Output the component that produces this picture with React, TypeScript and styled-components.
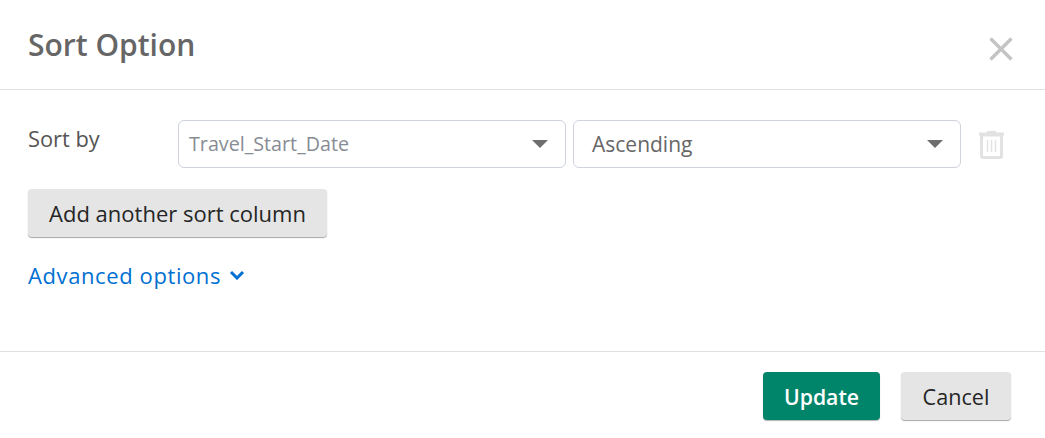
import React from "react";
import styled, { createGlobalStyle } from "styled-components";

const GlobalStyle = createGlobalStyle`
  html, body {
    margin: 0;
    padding: 0;
    background: #fff;
    font-family: "Open Sans", "Liberation Sans", sans-serif;
  }
`;

const Dialog = styled.div`
  width: 1045px;
  height: 438px;
  display: flex;
  flex-direction: column;
  background: #fff;
`;

const Header = styled.header`
  flex: none;
  box-sizing: border-box;
  height: 90px;
  display: flex;
  align-items: center;
  justify-content: space-between;
  padding: 0 30px 0 28px;
  border-bottom: 1px solid #e0e0e0;
`;

const Title = styled.h2`
  margin: 0;
  font-size: 30px;
  font-weight: 600;
  color: #666;
`;

const CloseButton = styled.button`
  display: flex;
  padding: 0;
  margin: 9px 1px 0 0;
  border: 0;
  background: none;
`;

const Body = styled.div`
  flex: none;
  box-sizing: border-box;
  height: 261px;
  padding: 30px 0 0 28px;
  display: flex;
  flex-direction: column;
  align-items: flex-start;
`;

const SortRow = styled.div`
  display: flex;
  align-items: flex-start;
`;

const SortLabel = styled.label`
  width: 150px;
  padding-top: 5px;
  font-size: 21.8px;
  line-height: 27px;
  color: #555;
`;

const Select = styled.div<{ $small?: boolean }>`
  box-sizing: border-box;
  width: 388px;
  height: 48px;
  margin-right: 7px;
  display: flex;
  align-items: center;
  justify-content: space-between;
  padding: 0 17px 1px ${(p) => (p.$small ? "10px" : "18px")};
  border: 1px solid #cfd3dc;
  border-radius: 6px;
  font-size: ${(p) => (p.$small ? "19.7px" : "21px")};
  color: ${(p) => (p.$small ? "#868b94" : "#666")};
`;

const Caret = styled.span`
  width: 0;
  height: 0;
  border-left: 8px solid transparent;
  border-right: 8px solid transparent;
  border-top: 8px solid #6e6e6e;
`;

const TrashButton = styled.button`
  display: flex;
  padding: 0;
  margin: 10px 0 0 11px;
  border: 0;
  background: none;
`;

const GreyButton = styled.button`
  height: 48px;
  border: 0;
  border-radius: 4px;
  background: #e5e5e5;
  box-shadow: 0 1px 1px rgba(0, 0, 0, 0.35);
  font-family: inherit;
  font-size: 21.6px;
  color: #262626;
`;

const AddButton = styled(GreyButton)`
  width: 299px;
  margin-top: 21px;
  padding: 0;
  font-size: 22px;
`;

const AdvancedLink = styled.a`
  display: flex;
  align-items: center;
  gap: 8px;
  margin-top: 24px;
  font-size: 22px;
  line-height: 28px;
  letter-spacing: 0.6px;
  color: #0070d2;
`;

const Footer = styled.footer`
  flex: none;
  box-sizing: border-box;
  height: 87px;
  border-top: 1px solid #e0e0e0;
  display: flex;
  justify-content: flex-end;
  gap: 21px;
  padding: 20px 34px 0 0;
`;

const UpdateButton = styled.button`
  width: 117px;
  height: 48px;
  border: 0;
  border-radius: 4px;
  background: #00856a;
  box-shadow: 0 1px 1px rgba(0, 0, 0, 0.3);
  font-family: inherit;
  font-size: 21.2px;
  font-weight: 600;
  color: #fff;
`;

const CancelButton = styled(GreyButton)`
  width: 110px;
`;

export default function App() {
  return (
    <>
      <GlobalStyle />
      <Dialog>
        <Header>
          <Title>Sort Option</Title>
          <CloseButton aria-label="Close">
            <svg width="26" height="26" viewBox="0 0 26 26">
              <path d="M2.5 2.5 L23.5 23.5 M23.5 2.5 L2.5 23.5" stroke="#c4c4c4" strokeWidth="3.4" />
            </svg>
          </CloseButton>
        </Header>
        <Body>
          <SortRow>
            <SortLabel>Sort by</SortLabel>
            <Select $small>
              Travel_Start_Date
              <Caret />
            </Select>
            <Select>
              Ascending
              <Caret />
            </Select>
            <TrashButton aria-label="Remove">
              <svg width="25" height="29" viewBox="0 0 25 29">
                <path d="M0 2.5h25v3H0z M8 1h9v2H8z" fill="#e2e2e2" />
                <path d="M2.5 5h20v21a1.5 1.5 0 0 1-1.5 1.5H4A1.5 1.5 0 0 1 2.500 26z" fill="none" stroke="#e2e2e2" strokeWidth="3" />
                <path d="M8.500 10v12 M12.500 10v12 M16.500 10v12" stroke="#e2e2e2" strokeWidth="1.400" />
              </svg>
            </TrashButton>
          </SortRow>
          <AddButton>Add another sort column</AddButton>
          <AdvancedLink>
            Advanced options
            <svg width="16" height="10" viewBox="0 0 16 10">
              <path d="M2 2 L8 8 L14 2" fill="none" stroke="#0070d2" strokeWidth="3" />
            </svg>
          </AdvancedLink>
        </Body>
        <Footer>
          <UpdateButton>Update</UpdateButton>
          <CancelButton>Cancel</CancelButton>
        </Footer>
      </Dialog>
    </>
  );
}
